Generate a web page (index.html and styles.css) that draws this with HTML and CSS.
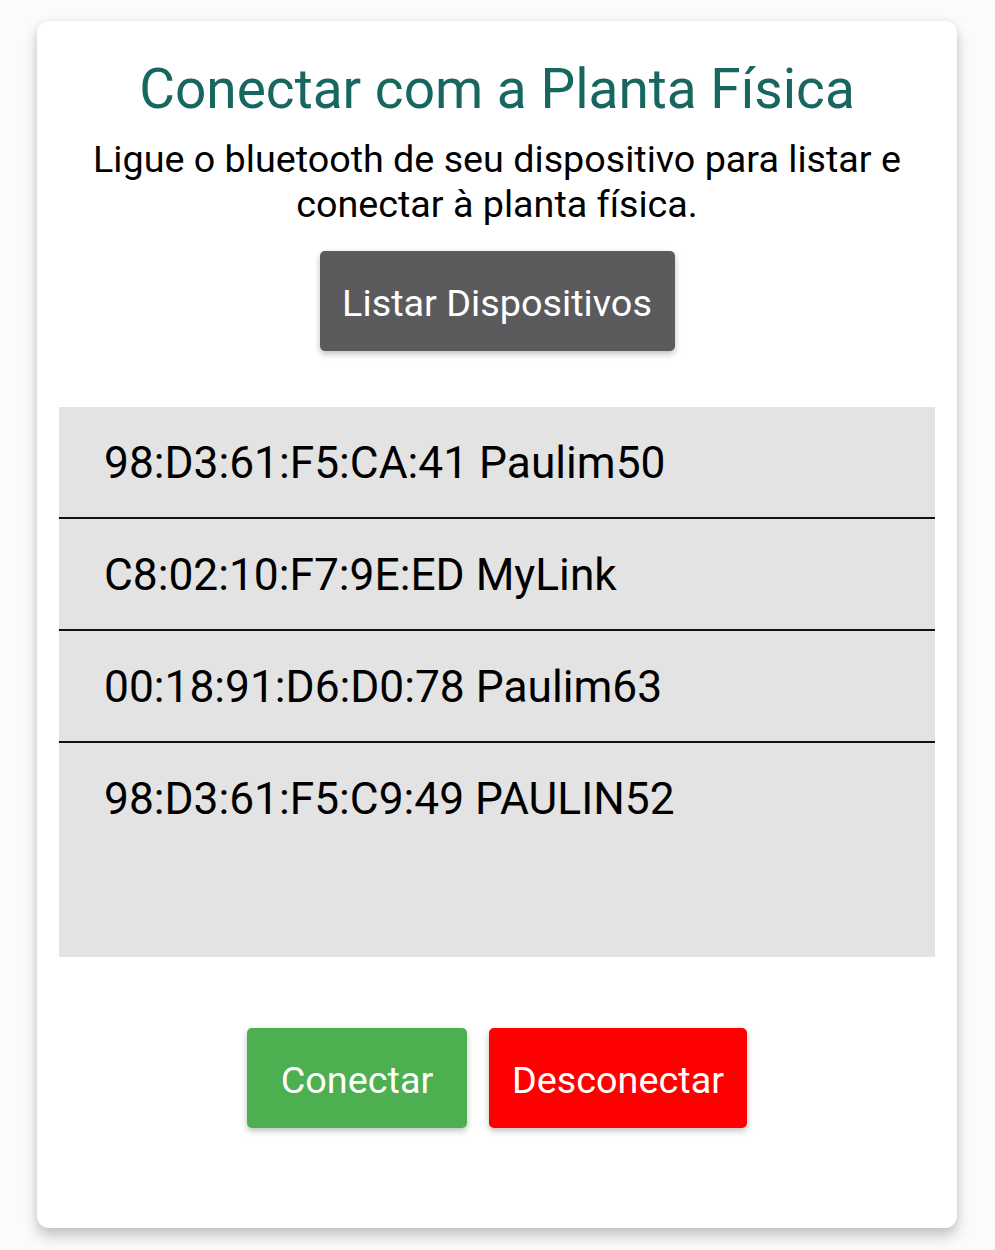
FILE: index.html
```html
<!DOCTYPE html>
<html lang="pt">
<head>
<meta charset="utf-8">
<link rel="stylesheet" href="styles.css">
</head>
<body>
<main class="card">
  <h1 class="title">Conectar com a Planta Física</h1>
  <p class="subtitle">Ligue o bluetooth de seu dispositivo para listar e conectar à planta física.</p>
  <div class="list-action">
    <button class="btn btn-dark">Listar Dispositivos</button>
  </div>
  <ul class="devices">
    <li class="device">98:D3:61:F5:CA:41 Paulim50</li>
    <li class="device">C8:02:10:F7:9E:ED MyLink</li>
    <li class="device">00:18:91:D6:D0:78 Paulim63</li>
    <li class="device device-last">98:D3:61:F5:C9:49 PAULIN52</li>
  </ul>
  <div class="actions">
    <button class="btn btn-green">Conectar</button>
    <button class="btn btn-red">Desconectar</button>
  </div>
</main>
</body>
</html>
```
FILE: styles.css
```css
html, body {
  margin: 0;
  padding: 0;
}
body {
  background: #fbfbfb;
  font-family: Roboto, "Noto Sans", "Liberation Sans", sans-serif;
  padding: 21px 38px 22px 37px;
}
.card {
  background: #ffffff;
  border-radius: 12px;
  box-shadow: 0 8px 14px rgba(0,0,0,0.22), 0 0 6px rgba(0,0,0,0.06);
  height: 1207px;
  box-sizing: border-box;
  padding: 30px 22px 0;
  display: flex;
  flex-direction: column;
}
.title {
  margin: 0;
  text-align: center;
  color: #17665f;
  font-weight: 400;
  font-size: 55px;
  line-height: 76px;
}
.subtitle {
  margin: 10px 0 0;
  text-align: center;
  color: #000;
  font-size: 37.7px;
  line-height: 45px;
  padding: 0 20px;
}
.list-action {
  display: flex;
  justify-content: center;
  margin-top: 24px;
}
.btn {
  border: none;
  border-radius: 5px;
  color: #fff;
  font-family: inherit;
  font-size: 37.8px;
  height: 100px;
  padding: 3px 0 0;
  box-sizing: border-box;
  box-shadow: 0 3px 6px rgba(0,0,0,0.25);
}
.btn-dark {
  background: #5b5b5d;
  width: 355px;
}
.devices {
  list-style: none;
  margin: 56px 0 0;
  padding: 0;
  background: #e3e3e3;
  height: 550px;
}
.device {
  height: 110px;
  border-bottom: 2px solid #111;
  box-sizing: content-box;
  padding-left: 45px;
  font-size: 44.3px;
  line-height: 113px;
  color: #000;
}
.device-last {
  border-bottom: none;
}
.actions {
  display: flex;
  justify-content: center;
  gap: 22px;
  margin-top: 71px;
}
.btn-green {
  background: #4caf50;
  width: 220px;
}
.btn-red {
  background: #fe0000;
  width: 258px;
}
```
